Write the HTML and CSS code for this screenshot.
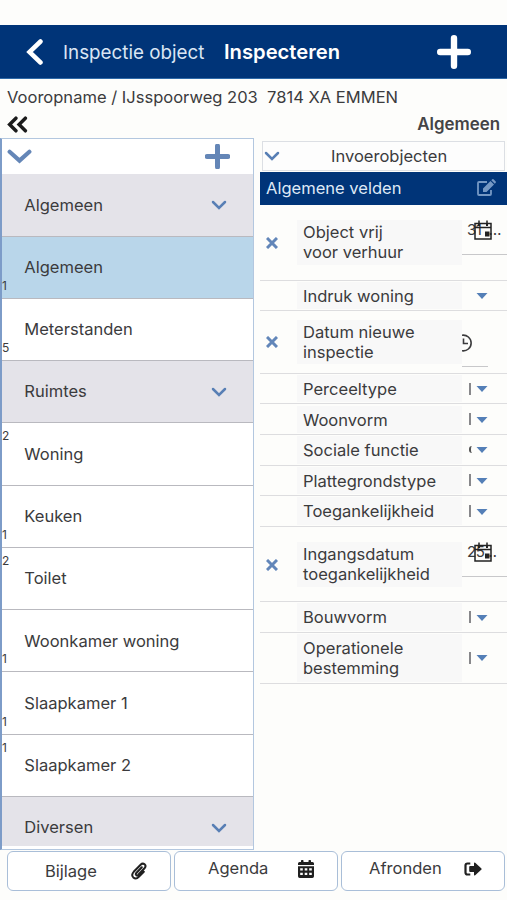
FILE: index.html
```html
<!DOCTYPE html>
<html lang="nl">
<head>
<meta charset="utf-8">
<title>Inspecteren</title>
<link rel="stylesheet" href="styles.css">
</head>
<body>
<svg class="defs" aria-hidden="true">
  <symbol id="chev" viewBox="0 0 16 10"><path d="M2 2l6 6 6-6" fill="none" stroke="currentColor" stroke-width="2.5" stroke-linecap="round"/></symbol>
  <symbol id="cross" viewBox="0 0 12 12"><path d="M1 1l10 10M11 1L1 11" fill="none" stroke="currentColor" stroke-width="3"/></symbol>
  <symbol id="caret" viewBox="0 0 12 6"><path d="M.5 0h11L6 6z" fill="currentColor"/></symbol>
  <symbol id="datepick" viewBox="0 0 20 20"><path d="M2 3h16v15.500H2zM2 7h16M6 0v5M14 0v5" fill="none" stroke="currentColor" stroke-width="1.500"/><path d="M5 2.500h2v3H5zM13 2.500h2v3h-2zM12 11h4.500v5H12z" fill="currentColor"/></symbol>
</svg>
<header class="topbar">
  <svg class="back" viewBox="0 0 18 26"><path d="M14.500 2.500L3.500 13l11 10.500" fill="none" stroke="currentColor" stroke-width="4.500" stroke-linecap="round"/></svg>
  <span class="back-label">Inspectie object</span>
  <h1>Inspecteren</h1>
  <svg class="add" viewBox="0 0 32 32"><path d="M16 3v26M3 16h26" stroke="currentColor" stroke-width="6" stroke-linecap="round"/></svg>
</header>
<p class="address">Vooropname / IJsspoorweg 203&nbsp; 7814 XA EMMEN</p>
<div class="section">
  <svg class="collapse" viewBox="0 0 20 16"><path d="M8.500 2L2.500 8l6 6M17.500 2l-6 6 6 6" fill="none" stroke="currentColor" stroke-width="3.300" stroke-linecap="round"/></svg>
  <strong>Algemeen</strong>
</div>
<main>
  <nav>
    <div class="tools">
      <svg class="expand" viewBox="0 0 24 16"><path d="M2.500 3.500L12 12l9.500-8.500" fill="none" stroke="currentColor" stroke-width="4" stroke-linecap="round"/></svg>
      <svg class="plus" viewBox="0 0 24 24"><path d="M12 2v20M2 12h20" stroke="currentColor" stroke-width="4.800" stroke-linecap="round"/></svg>
    </div>
    <div class="list">
      <div class="item group"><span>Algemeen</span><svg class="chev"><use href="#chev"/></svg></div>
      <div class="item selected"><span>Algemeen</span><small>1</small></div>
      <div class="item"><span>Meterstanden</span><small>5</small></div>
      <div class="item group"><span>Ruimtes</span><svg class="chev"><use href="#chev"/></svg></div>
      <div class="item"><span>Woning</span><small class="top">2</small></div>
      <div class="item"><span>Keuken</span><small>1</small></div>
      <div class="item"><span>Toilet</span><small class="top">2</small></div>
      <div class="item"><span>Woonkamer woning</span><small>1</small></div>
      <div class="item"><span>Slaapkamer 1</span><small>1</small></div>
      <div class="item"><span>Slaapkamer 2</span><small class="top">1</small></div>
      <div class="item group"><span>Diversen</span><svg class="chev"><use href="#chev"/></svg></div>
    </div>
  </nav>
  <section class="form">
    <div class="objects"><svg class="chev"><use href="#chev"/></svg><span>Invoerobjecten</span></div>
    <div class="band"><span>Algemene velden</span>
      <svg class="edit" viewBox="0 0 20 18"><path d="M11 3H3Q2 3 2 4v11q0 1 1 1h11q1 0 1-1v-4" fill="none" stroke="currentColor" stroke-width="1.800"/><path d="M7 9.500L14.500 2 18 5.500 10.500 13H7zM15.300 1.200l1-.9q.6-.5 1.200 0l2.200 2.200q.5.600 0 1.200l-.9 1z" fill="currentColor"/></svg>
    </div>
    <div class="field date"><svg class="cross"><use href="#cross"/></svg><label>Object vrij<br>voor verhuur</label><div class="value"><span>31<i>…</i></span><svg class="picker"><use href="#datepick"/></svg></div></div>
    <div class="field"><label>Indruk woning</label><div class="select"><span></span><svg class="caret"><use href="#caret"/></svg></div></div>
    <div class="field time"><svg class="cross"><use href="#cross"/></svg><label>Datum nieuwe<br>inspectie</label><div class="value"><svg class="clock" viewBox="0 0 11 18"><path d="M0 1.200A7.900 7.900 0 1 1 0 16.800M1.500 4.500V9.500H6" fill="none" stroke="currentColor" stroke-width="1.600"/></svg></div></div>
    <div class="field"><label>Perceeltype</label><div class="select"><span class="bar"></span><svg class="caret"><use href="#caret"/></svg></div></div>
    <div class="field"><label>Woonvorm</label><div class="select"><span class="bar"></span><svg class="caret"><use href="#caret"/></svg></div></div>
    <div class="field"><label>Sociale functie</label><div class="select"><span class="bar short"></span><svg class="caret"><use href="#caret"/></svg></div></div>
    <div class="field"><label>Plattegrondstype</label><div class="select"><span class="bar"></span><svg class="caret"><use href="#caret"/></svg></div></div>
    <div class="field"><label>Toegankelijkheid</label><div class="select"><span class="bar"></span><svg class="caret"><use href="#caret"/></svg></div></div>
    <div class="field date"><svg class="cross"><use href="#cross"/></svg><label>Ingangsdatum<br>toegankelijkheid</label><div class="value"><span>25<i class="tight">…</i></span><svg class="picker"><use href="#datepick"/></svg></div></div>
    <div class="field"><label>Bouwvorm</label><div class="select"><span class="bar"></span><svg class="caret"><use href="#caret"/></svg></div></div>
    <div class="field double"><label>Operationele<br>bestemming</label><div class="select"><span class="bar"></span><svg class="caret"><use href="#caret"/></svg></div></div>
  </section>
</main>
<footer>
  <button class="attach"><span>Bijlage</span><svg viewBox="0 0 18 18"><path d="M11.800 5.200L6.300 11q-1 1.200 0 2.100 1 .8 2-.3l6.200-6.500q2-2.300.1-4-2-1.600-4 .4L3.700 9.800q-2.800 3.200-.4 5.600 2.700 2.300 5.500-.5l5-5.200" fill="none" stroke="currentColor" stroke-width="2" stroke-linecap="round"/></svg></button>
  <button><span>Agenda</span><svg viewBox="0 0 18 18"><path fill-rule="evenodd" d="M1 5V3.500Q1 2 2.500 2H4V.8q0-.8.800-.8h.9q.8 0 .8.800V2h5V.8q0-.8.800-.8h.9q.8 0 .8.800V2h1.500Q17 2 17 3.500V5zM1 6.300h16v10q0 1.700-1.700 1.700H2.700Q1 18 1 16.300zM3.200 8.200v2.200h2.600V8.200zm4.500 0v2.200h2.600V8.200zm4.500 0v2.200h2.600V8.200zm-9 4.500V15h2.600v-2.300zm4.500 0V15h2.600v-2.300zm4.500 0V15h2.600v-2.300z" fill="currentColor"/></svg></button>
  <button><span>Afronden</span><svg viewBox="0 0 18 18"><path d="M6.300 3.500H3.500q-2 0-2 2v7q0 2 2 2h2.800" fill="none" stroke="currentColor" stroke-width="2.200"/><path d="M5.200 7q0-.9.900-.9H10V3.400q0-1.400 1.200-.6l6 5.400q.9.800 0 1.600l-6 5.400Q10 16 10 14.600v-2.700H6.100q-.9 0-.9-.9z" fill="currentColor"/></svg></button>
</footer>
</body>
</html>
```
FILE: styles.css
```css
* { box-sizing: border-box; }
body {
  margin: 0;
  height: 900px;
  padding-top: 25px;
  overflow: hidden;
  background: #fdfdfb;
  color: #3b3b3d;
  font: 16.55px/20.5px Inter, "Liberation Sans", sans-serif;
}
svg { display: block; flex: none; }
.defs { display: none; }
.topbar {
  height: 54px;
  display: flex;
  align-items: center;
  padding-top: 1px;
  background: #003478;
  border-bottom: 1px solid #2e69a8;
  color: #fff;
}
.back { width: 18px; height: 26px; margin-left: 26px; }
.back-label { width: 161px; margin-left: 19px; padding-top: 2px; font-size: 18.8px; color: #dbe6f4; white-space: nowrap; }
h1 { margin: 0; padding-top: 1px; font-size: 20.2px; font-weight: 600; }
.add { width: 34px; height: 34px; margin: 0 36px 0 auto; }
.address { height: 36px; margin: 0; padding-left: 7px; line-height: 36px; white-space: pre; }
.section { height: 22.500px; padding: 0 7px 5px 7px; display: flex; align-items: center; justify-content: space-between; }
.section strong { font-weight: 600; font-size: 16.9px; color: #444446; }
.collapse { width: 21px; height: 17px; color: #1b1b1b; margin-top: 1px; }
main { display: flex; align-items: flex-start; gap: 6px; height: 712.500px; }
nav {
  width: 254px;
  height: 712px;
  display: flex;
  flex-direction: column;
  border: 1px solid #b3c7df;
  border-left: 2px solid #7d9cc8;
  padding-bottom: 3px;
  background: #fff;
}
.tools { height: 35.800px; flex: none; display: flex; align-items: center; justify-content: space-between; padding: 0 23px 0 5px; color: #6486b7; }
.expand { width: 25px; height: 17px; }
.plus { width: 25px; height: 25px; }
.list { flex: 1; overflow: hidden; }
.item {
  position: relative;
  height: 62.280px;
  display: flex;
  align-items: center;
  justify-content: space-between;
  padding: 0 26px 0 22.300px;
  border-bottom: 1.500px solid #b9b9bf;
}
.group { background: #e4e3e9; }
.selected { background: #b9d6ea; }
.chev { width: 16px; height: 10px; color: #587fb5; }
.item small { position: absolute; left: 0; bottom: 4px; font-size: 12px; line-height: 17px; }
.item small.top { bottom: auto; top: 4px; }
.form { width: 247px; padding-top: 3px; }
.objects { height: 30px; margin: 0 2px 1px; display: flex; align-items: center; border: 1px solid #dcdfe4; background: #fdfdfd; padding: 1px 0 0 1px; }
.objects span { margin-left: 51px; }
.band { height: 33.500px; display: flex; align-items: center; justify-content: space-between; padding: 0 11px 0 6px; background: #003478; color: #dfe9f6; }
.edit { width: 20px; height: 18px; color: #7598c4; }
.field {
  height: 30.600px;
  display: grid;
  grid-template-columns: 37px 165px 45px;
  align-items: center;
  border-bottom: 1px solid #dddddf;
}
.field label { grid-column: 2; padding: 4px 0 3px 6px; background: #f8f8f8; white-space: nowrap; }
.field > * { grid-row: 1; }
.date { height: 75.500px; }
.date label, .time label { padding: 2px 0 1px 6px; }
.time { height: 62.800px; }
.double { height: 51px; }
.date label { height: 45px; }
.cross { width: 12px; height: 12px; margin-left: 6px; color: #6286b9; }
.date .cross, .time .cross { margin-top: 1px; }
.value { position: relative; align-self: start; height: 50px; border-bottom: 1px solid #c8c8ca; overflow: hidden; }
.date .value span { display: block; margin: 15px 0 0 5px; font-size: 15px; letter-spacing: -.5px; white-space: nowrap; }
.value i { font-style: normal; margin-left: 7px; }
.value i.tight { margin-left: 0; }
.picker { position: absolute; left: 11px; top: 15px; width: 20px; height: 21px; color: #222; }
.time .value { width: 26px; height: 56px; }
.clock { width: 11px; height: 18px; margin-top: 23px; }
.select { grid-column: 3; display: flex; align-items: center; padding-left: 7px; }
.select span { width: 7px; height: 12px; }
.bar { border-left: 2px solid #88888b; }
.select .bar.short { height: 7px; border-radius: 3px 0 0 3px; border-color: #555; }
.caret { width: 12px; height: 6px; color: #547fb7; margin-top: 1px; }
footer { display: grid; grid-template-columns: repeat(3, minmax(0, 1fr)); gap: 3px; padding: 1px 2px 0 7px; }
button {
  height: 40px;
  display: flex;
  align-items: center;
  justify-content: space-between;
  padding: 0 22px 5px 33px;
  border: 1.500px solid #a9bed8;
  border-radius: 6px;
  background: #fff;
  color: inherit;
  font: inherit;
}
button svg { width: 18px; height: 18px; color: #202020; }
.attach { padding: 0 22px 0 37px; }
button:last-child { padding-left: 27px; }
```
